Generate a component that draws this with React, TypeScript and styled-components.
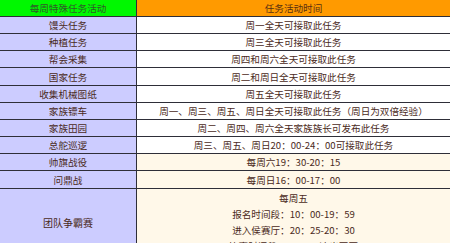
import { Fragment } from "react";
import styled, { createGlobalStyle } from "styled-components";

const GlobalStyle = createGlobalStyle`
  html, body {
    margin: 0;
    padding: 0;
    background: #ffffff;
    overflow: hidden;
  }
`;

const Table = styled.div`
  display: grid;
  grid-template-columns: 137px 313px;
  width: 450px;
  font-family: "Noto Sans CJK SC", "Noto Sans", sans-serif;
  font-size: 9.6px;
  color: #4a2a22;
`;

type CellProps = { $bg: string; $h?: number };

const Cell = styled.div<CellProps>`
  display: flex;
  align-items: center;
  justify-content: center;
  height: ${(p) => p.$h ?? 16}px;
  border-bottom: 1px solid #2e2e38;
  background: ${(p) => p.$bg};
  white-space: nowrap;
  overflow: hidden;
`;

const NameCell = styled(Cell)`
  border-right: 1px solid #2e2e38;
`;

const HeadName = styled(NameCell)`
  color: #2f5a2a;
`;

const HeadTime = styled(Cell)`
  color: #5a2f10;
`;

const TallName = styled(NameCell)`
  height: 66px;
  font-size: 10px;
`;

const TallTime = styled(Cell)`
  height: 66px;
  flex-direction: column;
  justify-content: flex-start;
  padding-top: 1px;
`;

const Line = styled.div`
  line-height: 16px;
  height: 16px;
`;

const LAVENDER = "#ccccff";
const WHITE = "#ffffff";
const CREAM = "#fff8e9";

const rows: { name: string; time: string; bg: string }[] = [
  { name: "馒头任务", time: "周一全天可接取此任务", bg: WHITE },
  { name: "种植任务", time: "周三全天可接取此任务", bg: WHITE },
  { name: "帮会采集", time: "周四和周六全天可接取此任务", bg: WHITE },
  { name: "国家任务", time: "周二和周日全天可接取此任务", bg: WHITE },
  { name: "收集机械图纸", time: "周五全天可接取此任务", bg: WHITE },
  {
    name: "家族镖车",
    time: "周一、周三、周五、周日全天可接取此任务（周日为双倍经验）",
    bg: WHITE,
  },
  { name: "家族田园", time: "周二、周四、周六全天家族族长可发布此任务", bg: WHITE },
  { name: "总舵巡逻", time: "周三、周五、周日20：00-24：00可接取此任务", bg: WHITE },
  { name: "帅旗战役", time: "每周六19：30-20：15", bg: CREAM },
  { name: "问鼎战", time: "每周日16：00-17：00", bg: CREAM },
];

const finalLines = [
  "每周五",
  "报名时间段：10：00-19：59",
  "进入侯赛厅：20：25-20：30",
  "比赛时间段：20：30 决出冠军",
];

export default function App() {
  return (
    <>
      <GlobalStyle />
      <Table>
        <HeadName $bg="#00f800">每周特殊任务活动</HeadName>
        <HeadTime $bg="#ff9a00">任务活动时间</HeadTime>
        {rows.map((r, i) => (
          <Fragment key={r.name}>
            {/* rows drift a little in the original, add a pixel now and then */}
            <NameCell $bg={LAVENDER} $h={i === 3 || i === 9 ? 17 : 16}>
              {r.name}
            </NameCell>
            <Cell $bg={r.bg} $h={i === 3 || i === 9 ? 17 : 16}>
              {r.time}
            </Cell>
          </Fragment>
        ))}
        <TallName $bg={LAVENDER}>团队争霸赛</TallName>
        <TallTime $bg={CREAM}>
          {finalLines.map((l) => (
            <Line key={l}>{l}</Line>
          ))}
        </TallTime>
      </Table>
    </>
  );
}
